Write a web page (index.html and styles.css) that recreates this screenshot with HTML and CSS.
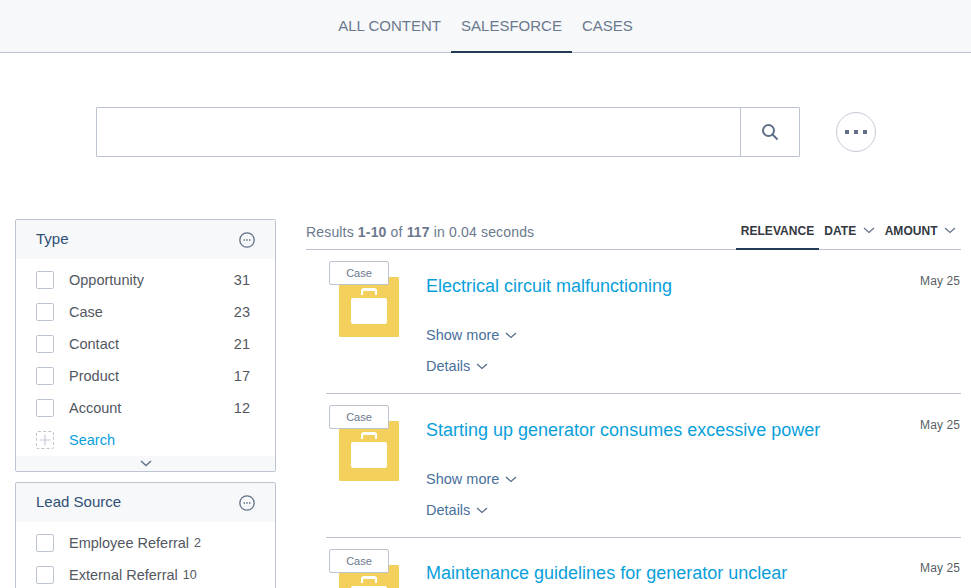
FILE: index.html
```html
<!DOCTYPE html>
<html lang="en">
<head>
  <meta charset="UTF-8" />
  <title>Search</title>
  <meta name="viewport" content="width=device-width, initial-scale=1.0">
  <link rel="stylesheet" href="styles.css">
</head>
<body>
  <nav class="tabs">
    <a class="tab">ALL CONTENT</a>
    <a class="tab active">SALESFORCE</a>
    <a class="tab">CASES</a>
  </nav>

  <div class="search-row">
    <div class="search-box">
      <div class="search-input"></div>
      <button class="search-btn">
        <svg width="18" height="18" viewBox="0 0 18 18" fill="none" stroke="#5f6f87" stroke-width="2"><circle cx="7.5" cy="7.5" r="5.5"/><path d="M11.5 11.5L16.5 16.5"/></svg>
      </button>
    </div>
    <button class="more-btn"><i></i><i></i><i></i></button>
  </div>

  <div class="main">
    <aside class="facets">
      <section class="facet">
        <header class="facet-head">
          <span class="facet-name">Type</span>
          <svg width="16" height="16" viewBox="0 0 16 16"><circle cx="8" cy="8" r="7.2" fill="none" stroke="#5f6f87" stroke-width="1.3"/><path d="M4.6 7.2h1.4v1.5H4.6zM7.3 7.2h1.4v1.5H7.3zM10 7.2h1.4v1.5H10z" fill="#5f6f87"/></svg>
        </header>
        <ul class="facet-list">
          <li><span class="check"></span><span class="label">Opportunity</span><span class="count">31</span></li>
          <li><span class="check"></span><span class="label">Case</span><span class="count">23</span></li>
          <li><span class="check"></span><span class="label">Contact</span><span class="count">21</span></li>
          <li><span class="check"></span><span class="label">Product</span><span class="count">17</span></li>
          <li><span class="check"></span><span class="label">Account</span><span class="count">12</span></li>
          <li>
            <span class="check dashed"><svg width="16" height="16" viewBox="0 0 16 16"><path d="M8 2.5v11M2.5 8h11" stroke="#c3cad5" stroke-width="1.2"/></svg></span>
            <span class="label link">Search</span>
          </li>
        </ul>
        <footer class="facet-foot">
          <svg width="12" height="7" viewBox="0 0 12 7" fill="none" stroke="#5f6f87" stroke-width="1.4"><path d="M1 1l5 4.5L11 1"/></svg>
        </footer>
      </section>

      <section class="facet">
        <header class="facet-head">
          <span class="facet-name">Lead Source</span>
          <svg width="16" height="16" viewBox="0 0 16 16"><circle cx="8" cy="8" r="7.2" fill="none" stroke="#5f6f87" stroke-width="1.3"/><path d="M4.6 7.2h1.4v1.5H4.6zM7.3 7.2h1.4v1.5H7.3zM10 7.2h1.4v1.5H10z" fill="#5f6f87"/></svg>
        </header>
        <ul class="facet-list">
          <li><span class="check"></span><span class="label">Employee Referral</span><span class="count inline">2</span></li>
          <li><span class="check"></span><span class="label">External Referral</span><span class="count inline">10</span></li>
        </ul>
      </section>
    </aside>

    <div class="results">
      <div class="results-head">
        <div class="summary">Results <b>1-10</b> of <b>117</b> in 0.04 seconds</div>
        <div class="sorts">
          <a class="sort active">RELEVANCE</a>
          <a class="sort">DATE <svg width="12" height="7" viewBox="0 0 12 7" fill="none" stroke="#5f6f87" stroke-width="1.1"><path d="M1 1l5 4.5L11 1"/></svg></a>
          <a class="sort">AMOUNT <svg width="12" height="7" viewBox="0 0 12 7" fill="none" stroke="#5f6f87" stroke-width="1.1"><path d="M1 1l5 4.5L11 1"/></svg></a>
        </div>
      </div>

      <article class="result">
        <div class="thumb">
          <span class="badge">Case</span>
          <svg width="36" height="36" viewBox="0 0 36 36" fill="#fff"><path d="M10 7V3a3 3 0 0 1 3-3h10a3 3 0 0 1 3 3v4h-2V4a1 1 0 0 0-1-1H13a1 1 0 0 0-1 1v3z"/><rect y="10" width="36" height="26" rx="2"/></svg>
        </div>
        <div class="body">
          <a class="title">Electrical circuit malfunctioning</a>
          <a class="toggle">Show more <svg width="12" height="7" viewBox="0 0 12 7" fill="none" stroke="#54698d" stroke-width="1.2"><path d="M1 1l5 4.500L11 1"/></svg></a>
          <a class="toggle">Details <svg width="12" height="7" viewBox="0 0 12 7" fill="none" stroke="#54698d" stroke-width="1.2"><path d="M1 1l5 4.500L11 1"/></svg></a>
        </div>
        <time class="date">May 25</time>
      </article>

      <article class="result">
        <div class="thumb">
          <span class="badge">Case</span>
          <svg width="36" height="36" viewBox="0 0 36 36" fill="#fff"><path d="M10 7V3a3 3 0 0 1 3-3h10a3 3 0 0 1 3 3v4h-2V4a1 1 0 0 0-1-1H13a1 1 0 0 0-1 1v3z"/><rect y="10" width="36" height="26" rx="2"/></svg>
        </div>
        <div class="body">
          <a class="title">Starting up generator consumes excessive power</a>
          <a class="toggle">Show more <svg width="12" height="7" viewBox="0 0 12 7" fill="none" stroke="#54698d" stroke-width="1.2"><path d="M1 1l5 4.500L11 1"/></svg></a>
          <a class="toggle">Details <svg width="12" height="7" viewBox="0 0 12 7" fill="none" stroke="#54698d" stroke-width="1.2"><path d="M1 1l5 4.500L11 1"/></svg></a>
        </div>
        <time class="date">May 25</time>
      </article>

      <article class="result">
        <div class="thumb">
          <span class="badge">Case</span>
          <svg width="36" height="36" viewBox="0 0 36 36" fill="#fff"><path d="M10 7V3a3 3 0 0 1 3-3h10a3 3 0 0 1 3 3v4h-2V4a1 1 0 0 0-1-1H13a1 1 0 0 0-1 1v3z"/><rect y="10" width="36" height="26" rx="2"/></svg>
        </div>
        <div class="body">
          <a class="title">Maintenance guidelines for generator unclear</a>
        </div>
        <time class="date">May 25</time>
      </article>
    </div>
  </div>
</body>
</html>
```

FILE: styles.css
```css
html, body {
  height: 588px;
  overflow: hidden;
}
body {
  margin: 0;
  background: #fff;
  font-family: "Liberation Sans", Arial, sans-serif;
  font-size: 14px;
  color: #53585f;
}
.tabs {
  display: flex;
  justify-content: center;
  height: 52px;
  background: #f6f8fa;
  border-bottom: 1px solid #bcc4d0;
}
.tab {
  padding: 0 10px;
  line-height: 51px;
  font-size: 15px;
  color: #6b788e;
  margin-bottom: -1px;
  border-bottom: 2px solid transparent;
  height: 51px;
}
.tab.active {
  border-bottom-color: #243b55;
}
.search-row {
  display: flex;
  align-items: center;
  margin: 54px 0 0 96px;
}
.search-box {
  display: flex;
  width: 702px;
  height: 48px;
  border: 1px solid #bcc4d0;
  border-radius: 1px;
}
.search-input {
  flex: 1;
}
.search-btn {
  width: 59px;
  padding: 0;
  background: #fff;
  border: 0;
  border-left: 1px solid #bcc4d0;
  display: flex;
  align-items: center;
  justify-content: center;
}
.more-btn {
  width: 40px;
  height: 40px;
  margin-left: 36px;
  padding: 0;
  background: #fff;
  border: 1px solid #c5cbd6;
  border-radius: 50%;
  display: flex;
  align-items: center;
  justify-content: center;
  gap: 5px;
}
.more-btn i {
  width: 4px;
  height: 4px;
  background: #5f6f87;
}
.main {
  display: flex;
  align-items: flex-start;
  margin: 62px 10px 0 15px;
}
.facets {
  width: 261px;
  flex: none;
}
.facet {
  border: 1px solid #bcc4d0;
  border-radius: 2px;
  margin-bottom: 10px;
}
.facet-head {
  height: 39px;
  display: flex;
  align-items: center;
  justify-content: space-between;
  padding: 0 20px;
  background: #f6f8fa;
  font-size: 15px;
  color: #2f4f74;
}
.facet-name {
  padding-bottom: 2px;
}
.facet-list {
  list-style: none;
  margin: 5px 0 0;
  padding: 0 25px 0 20px;
}
.facet-list li {
  display: flex;
  align-items: center;
  height: 32px;
  font-size: 14.500px;
}
.check {
  width: 16px;
  height: 16px;
  border: 1px solid #bcc4d0;
  border-radius: 2px;
  margin-right: 15px;
  flex: none;
}
.check.dashed {
  border-style: dashed;
  display: flex;
  align-items: center;
  justify-content: center;
}
.label {
  flex: none;
}
.label.link {
  color: #0aa0dc;
}
.count {
  margin-left: auto;
}
.count.inline {
  margin-left: 5px;
  font-size: 12.500px;
}
.facet-foot {
  height: 15px;
  background: #f6f8fa;
  display: flex;
  align-items: center;
  justify-content: center;
}
.results {
  flex: 1;
  margin-left: 30px;
}
.results-head {
  display: flex;
  justify-content: space-between;
  align-items: flex-end;
  height: 30px;
  border-bottom: 1px solid #bcc4d0;
}
.summary {
  font-size: 14px;
  letter-spacing: 0.16px;
  color: #6b788e;
  line-height: 18px;
  padding-bottom: 8px;
}
.sorts {
  display: flex;
  margin-bottom: -1px;
}
.sort {
  font-size: 12px;
  font-weight: bold;
  letter-spacing: 0.05px;
  color: #33383f;
  padding: 0 5px;
  line-height: 18px;
  height: 28px;
  border-bottom: 2px solid transparent;
  box-sizing: border-box;
}
.sort.active {
  border-bottom-color: #243b55;
}
.sort svg {
  margin-left: 3px;
  vertical-align: 1px;
}
.result {
  display: flex;
  margin-left: 20px;
  height: 143px;
  border-bottom: 1px solid #bcc4d0;
}
.thumb {
  position: relative;
  width: 60px;
  height: 60px;
  margin: 27px 0 0 13px;
  background: #f3cf5b;
  border-radius: 1px;
  flex: none;
  display: flex;
  align-items: flex-end;
  justify-content: center;
}
.thumb svg {
  margin-bottom: 13px;
}
.badge {
  position: absolute;
  left: -10px;
  top: -16px;
  width: 58px;
  height: 22px;
  line-height: 22px;
  text-align: center;
  background: #fff;
  border: 1px solid #bcc4d0;
  border-radius: 2px;
  font-size: 11px;
  color: #6b788e;
}
.body {
  flex: 1;
  margin-left: 27px;
  padding-top: 26px;
  display: flex;
  flex-direction: column;
  align-items: flex-start;
}
.title {
  font-size: 18px;
  line-height: 21px;
  color: #0a9fdb;
  margin-bottom: 23px;
}
.toggle {
  font-size: 14.500px;
  line-height: 31px;
  color: #48709b;
}
.toggle svg {
  margin-left: 2px;
  vertical-align: 1px;
}
.date {
  margin: 24px 1px 0 0;
  font-size: 12px;
  letter-spacing: 0.1px;
  color: #5a5f66;
}
.result:last-child .body {
  padding-top: 25px;
}
.result:last-child .date {
  margin-top: 23px;
}
```
